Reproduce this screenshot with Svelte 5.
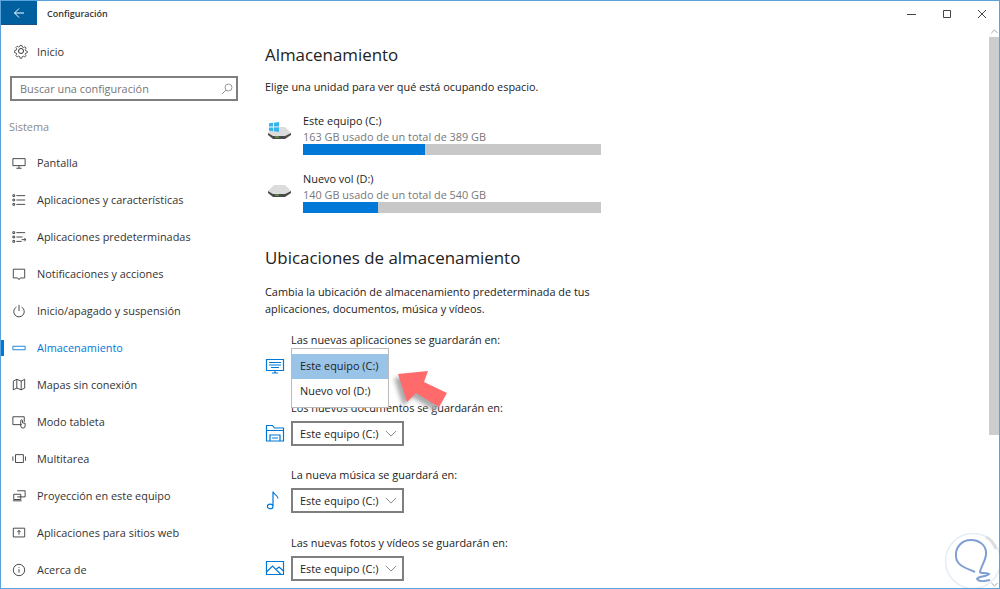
<script>
  const navItems = [
    { label: 'Pantalla', icon: 'M1 3h14v8H1z M5 14h6 M8 11v3' },
    { label: 'Aplicaciones y características', icon: 'M1 2h2v2H1z M1 7h2v2H1z M1 12h2v2H1z M5 3h10 M5 8h10 M5 13h10' },
    { label: 'Aplicaciones predeterminadas', icon: 'M1 2h2v2H1z M1 7h2v2H1z M1 12h2v2H1z M5 3h10 M5 8h7 M5 13h6 M11 11h5 M14 9l2 2-2 2' },
    { label: 'Notificaciones y acciones', icon: 'M1.500 2.500h13v10h-5l-1.500 2-1.500-2h-5z' },
    { label: 'Inicio/apagado y suspensión', icon: 'M5 3.500a6 6 0 1 0 6 0 M8 1v7' },
    { label: 'Almacenamiento', icon: 'M1 6h14v4H1z', active: true },
    { label: 'Mapas sin conexión', icon: 'M1.500 3.500l4-2 5 2 4-2v10l-4 2-5-2-4 2z M5.500 1.500v10 M10.500 3.500v10' },
    { label: 'Modo tableta', icon: 'M11 11H1V2h13v6 M10 9v-2.500a1 1 0 0 1 2 0V9l3 .5v3a2.500 2.500 0 0 1-5 0z' },
    { label: 'Multitarea', icon: 'M4 3h9v9H4z M1 5v5 M15.500 5v5' },
    { label: 'Proyección en este equipo', icon: 'M6 2h9v7H6 M2 6h8v6H2z M1 13.500h10' },
    { label: 'Aplicaciones para sitios web', icon: 'M1.500 2.500h13v10h-13z M8 10V5 M6 7l2-2 2 2' },
    { label: 'Acerca de', icon: 'M8 1.500a6.500 6.500 0 1 0 0 13 6.500 6.500 0 0 0 0-13z M8 7v4 M8 4.500v1' }
  ]

  const drives = [
    { name: 'Este equipo (C:)', used: '163 GB usado de un total de 389 GB', pct: 41, windows: true },
    { name: 'Nuevo vol (D:)', used: '140 GB usado de un total de 540 GB', pct: 25, windows: false }
  ]

  const locations = [
    { label: 'Las nuevas aplicaciones se guardarán en:', icon: 'M1.500 3.500h17v11h-17z M7 17h6 M10 14.500V17 M4 6.500h12 M4 9h12 M6 11.500h8' },
    { label: 'Los nuevos documentos se guardarán en:', icon: 'M1.500 18V2.500h6l2 2.500h9v13z M1.500 7.500h17 M5 18v-6h10v6 M7 15h6' },
    { label: 'La nueva música se guardará en:', icon: 'M8 15V.5c.5 3 5 3.500 5 7 M8 15.500a2.800 2.300 0 1 1-5.600 0 2.800 2.300 0 0 1 5.600 0z' },
    { label: 'Las nuevas fotos y vídeos se guardarán en:', icon: 'M1.500 3.500h17v13h-17z M1.500 14l6-6 8.500 8.500 M11 11.500l3-2.500 4.500 4' }
  ]
</script>

<div class="window">
  <header class="titlebar">
    <div class="back">
      <svg width="12" height="12" viewBox="0 0 12 12"><path d="M11 6H1.500M6 1.500L1.500 6 6 10.500" /></svg>
    </div>
    <span class="title">Configuración</span>
    <div class="controls">
      <svg width="10" height="10" viewBox="0 0 10 10"><path d="M0 5.500h9" /></svg>
      <svg width="10" height="10" viewBox="0 0 10 10"><path d="M1.500 1.500h7v7h-7z" /></svg>
      <svg width="10" height="10" viewBox="0 0 10 10"><path d="M1 1l8 8M9 1l-8 8" /></svg>
    </div>
  </header>

  <div class="body">
    <nav class="sidebar">
      <div class="home">
        <svg width="16" height="16" viewBox="0 0 16 16">
          <circle cx="8" cy="8" r="2.500" />
          <path d="M6.800 1h2.400l.4 2 1.500.7 1.800-1 1.500 1.700-1.100 1.700.5 1.500 2 .6v2l-2 .5-.6 1.500 1.100 1.700-1.600 1.600-1.700-1-1.500.6-.5 1.900H6.800l-.4-2-1.500-.6-1.700 1-1.600-1.600 1-1.700-.6-1.500-2-.5V7.500l2-.6.6-1.500-1-1.700 1.600-1.700 1.700 1 1.500-.7z" transform="translate(1.600 1.600) scale(.8)" />
        </svg>
        <span>Inicio</span>
      </div>
      <div class="search">
        <span>Buscar una configuración</span>
        <svg width="12" height="12" viewBox="0 0 12 12"><circle cx="7.500" cy="4.500" r="3.500" /><path d="M5 7l-4 4" /></svg>
      </div>
      <div class="group">Sistema</div>
      <ul>
        {#each navItems as item}
          <li class:active={item.active}>
            <svg width="16" height="16" viewBox="0 0 16 16"><path d={item.icon} /></svg>
            <span>{item.label}</span>
          </li>
        {/each}
      </ul>
    </nav>

    <main class="content">
      <h1>Almacenamiento</h1>
      <p class="intro">Elige una unidad para ver qué está ocupando espacio.</p>

      {#each drives as drive}
        <div class="drive">
          <div class="drive-icon">
            <svg class="disk" width="23" height="12" viewBox="0 0 23 12">
              <path class="disk-top" d="M6 0h11l6 6-6 3H5L0 6z" />
              <path class="disk-base" d="M0 6l5 3h12l6-3v2l-6 4H5L0 8z" />
              <path class="disk-led" d="M7 10h4" />
            </svg>
            {#if drive.windows}
              <svg class="win" width="10" height="10" viewBox="0 0 11 11">
                <path d="M0 1.500l4.500-.7v4.200H0z M5.500.7L11 0v5H5.500z M0 6h4.500v4.200L0 9.500z M5.500 6H11v5l-5.500-.7z" />
              </svg>
            {/if}
          </div>
          <div class="drive-info">
            <div class="drive-name">{drive.name}</div>
            <div class="drive-used">{drive.used}</div>
            <div class="bar"><div class="fill" style="width: {drive.pct}%"></div></div>
          </div>
        </div>
      {/each}

      <h2>Ubicaciones de almacenamiento</h2>
      <p class="desc">Cambia la ubicación de almacenamiento predeterminada de tus aplicaciones, documentos, música y vídeos.</p>

      {#each locations as loc, i}
        <div class="location">
          <div class="loc-label">{loc.label}</div>
          <div class="loc-row">
            <svg class="loc-icon" width="20" height="20" viewBox="0 0 20 20"><path d={loc.icon} /></svg>
            {#if i === 0}
              <div class="popup">
                <div class="option selected">Este equipo (C:)</div>
                <div class="option">Nuevo vol (D:)</div>
              </div>
            {:else}
              <div class="combo">
                <span>Este equipo (C:)</span>
                <svg width="14" height="8" viewBox="0 0 14 8"><path d="M1 1l6 6 6-6" /></svg>
              </div>
            {/if}
          </div>
        </div>
      {/each}
    </main>

    <div class="scrollbar">
      <svg class="arrow-btn" width="7" height="5" viewBox="0 0 9 6"><path d="M.5 5l4-4 4 4" /></svg>
      <div class="thumb"></div>
      <div class="track"></div>
      <svg class="arrow-btn" width="7" height="5" viewBox="0 0 9 6"><path d="M.5 1l4 4 4-4" /></svg>
    </div>
  </div>

  <svg class="pointer" width="56" height="46" viewBox="0 0 56 46">
    <path class="pointer-head" d="M1 9l30-3-4 11 23 11-8 14-23-14-9 9z" />
  </svg>

  <svg class="mark" width="58" height="58" viewBox="0 0 58 58">
    <circle cx="29" cy="29" r="27.500" />
    <path class="mark-arc" d="M42 5c4 2 8 7 10 12" />
    <path class="mark-bulb" d="M31 40C22 36 13 34 12 25 11 15 18 8 27 8c9 0 16 6 15 15-1 7-5 11-6 17 0 2 6 0 9 2-3 3-11 2-12 5 2 3 9 2 13 1" />
  </svg>
</div>

<style>
  :global(body) {
    margin: 0;
    background: #fff;
  }

  .window {
    position: relative;
    box-sizing: border-box;
    width: 1000px;
    height: 589px;
    overflow: hidden;
    display: flex;
    flex-direction: column;
    border: 1px solid #5ba3dc;
    font-family: "Open Sans", "Noto Sans", sans-serif;
    font-size: 10.900px;
    color: #222;
  }

  svg path,
  svg circle {
    fill: none;
    stroke: currentColor;
  }

  .titlebar {
    display: flex;
    align-items: center;
    height: 24px;
    flex: none;
  }

  .back {
    width: 37px;
    height: 24px;
    box-sizing: border-box;
    border-bottom: 1px solid #1c4f7c;
    background: #00609f;
    color: #fff;
    display: flex;
    align-items: center;
    justify-content: center;
    margin-left: -1px;
  }

  .title {
    margin-left: 10px;
    font-size: 9px;
    font-weight: 600;
    color: #333;
  }

  .controls {
    margin-left: auto;
    display: flex;
    gap: 25px;
    padding-right: 12px;
    margin-top: 2px;
    color: #444;
  }

  .body {
    flex: 1;
    display: flex;
    min-height: 0;
  }

  .sidebar {
    width: 244px;
    flex: none;
    padding: 14px 0 0 1px;
    box-sizing: border-box;
  }

  .home {
    display: flex;
    align-items: center;
    gap: 8px;
    padding-left: 11px;
    height: 24px;
    color: #333;
  }

  .search {
    margin: 13px 0 0 8px;
    width: 228px;
    height: 25px;
    box-sizing: border-box;
    border: 2px solid #7f7f7f;
    display: flex;
    align-items: center;
    justify-content: space-between;
    padding: 0 3px 0 8px;
    color: #777;
  }

  .search svg {
    color: #999;
  }

  .group {
    margin: 18px 0 0 7px;
    line-height: 16px;
    color: #8a8a8a;
  }

  ul {
    list-style: none;
    margin: 9px 0 0;
    padding: 0;
  }

  li {
    display: flex;
    align-items: center;
    gap: 11px;
    height: 37px;
    padding-left: 10px;
    position: relative;
    color: #333;
  }

  li svg {
    flex: none;
    width: 14px;
    height: 14px;
  }

  li.active {
    color: #0078d7;
  }

  li.active::before {
    content: "";
    position: absolute;
    left: -1px;
    top: 11px;
    width: 3px;
    height: 16px;
    background: #0078d7;
  }

  .content {
    flex: 1;
    min-width: 0;
    padding: 18px 0 0 20px;
  }

  h1,
  h2 {
    margin: 0;
    font-weight: 400;
    font-size: 16.900px;
    line-height: 24px;
    color: #222;
  }

  .intro {
    margin: 12px 0 17px;
    line-height: 16px;
  }

  .drive {
    display: flex;
    gap: 13px;
    height: 58px;
  }

  .drive-icon {
    width: 25px;
    flex: none;
    position: relative;
    height: 40px;
  }

  .drive-icon .win {
    position: absolute;
    left: 4px;
    top: 10px;
  }

  .win path {
    fill: #35b4ec;
    stroke: none;
  }

  .drive-icon .disk {
    position: absolute;
    left: 3px;
    top: 15px;
  }

  .disk .disk-top {
    fill: #dcdcdc;
    stroke: none;
  }

  .disk .disk-base {
    fill: #4a4a4a;
    stroke: none;
  }

  .disk .disk-led {
    stroke: #6fbf4a;
  }

  .drive-name {
    line-height: 16px;
    margin-top: 1px;
  }

  .drive-used {
    line-height: 16px;
    color: #777;
  }

  .bar {
    width: 298px;
    height: 11px;
    margin-top: -1px;
    background: #c8c8c8;
  }

  .fill {
    height: 100%;
    background: #0078d7;
  }

  h2 {
    margin-top: 18px;
  }

  .desc {
    margin: 13px 0 15px;
    width: 340px;
    line-height: 17px;
  }

  .location {
    height: 67.500px;
  }

  .loc-label {
    margin-left: 26px;
    line-height: 16px;
  }

  .loc-row {
    position: relative;
    display: flex;
    align-items: center;
    gap: 6px;
    min-height: 25px;
    margin-top: 5px;
  }

  .loc-icon {
    color: #0078d7;
    flex: none;
  }

  .loc-icon path {
    stroke-width: 1.200px;
  }

  .combo {
    width: 113px;
    height: 25px;
    box-sizing: border-box;
    border: 2px solid #7f7f7f;
    display: flex;
    align-items: center;
    justify-content: space-between;
    padding: 0 5px 0 7px;
  }

  .combo svg {
    color: #777;
    width: 12px;
    height: 7px;
  }

  .popup {
    position: absolute;
    left: 26px;
    top: -5px;
    width: 98px;
    height: 60px;
    box-sizing: border-box;
    background: #fff;
    border: 1px solid #bbb;
    padding-top: 5px;
  }

  .option {
    height: 24.500px;
    line-height: 24.500px;
    padding-left: 8px;
  }

  .option.selected {
    background: #99c4e8;
  }

  .scrollbar {
    width: 10px;
    flex: none;
    display: flex;
    flex-direction: column;
    align-items: center;
    padding: 4px 0 1px;
    color: #888;
  }

  .arrow-btn {
    flex: none;
  }

  .thumb {
    width: 100%;
    height: 398px;
    margin-top: 3px;
    background: #cdcdcd;
  }

  .track {
    flex: 1;
  }

  .pointer {
    position: absolute;
    left: 396px;
    top: 364px;
    overflow: visible;
    filter: drop-shadow(-4px 4px 2px #aaa);
  }

  .pointer .pointer-head {
    fill: #ff6b6b;
    stroke: none;
  }

  .mark {
    position: absolute;
    left: 943px;
    top: 531px;
  }

  .mark circle {
    stroke: #e4ecf5;
    stroke-width: 1.500px;
  }

  .mark .mark-arc {
    stroke: #ddd;
    stroke-width: 3px;
  }

  .mark .mark-bulb {
    stroke: #7f9fd3;
    stroke-width: 2px;
  }
</style>
